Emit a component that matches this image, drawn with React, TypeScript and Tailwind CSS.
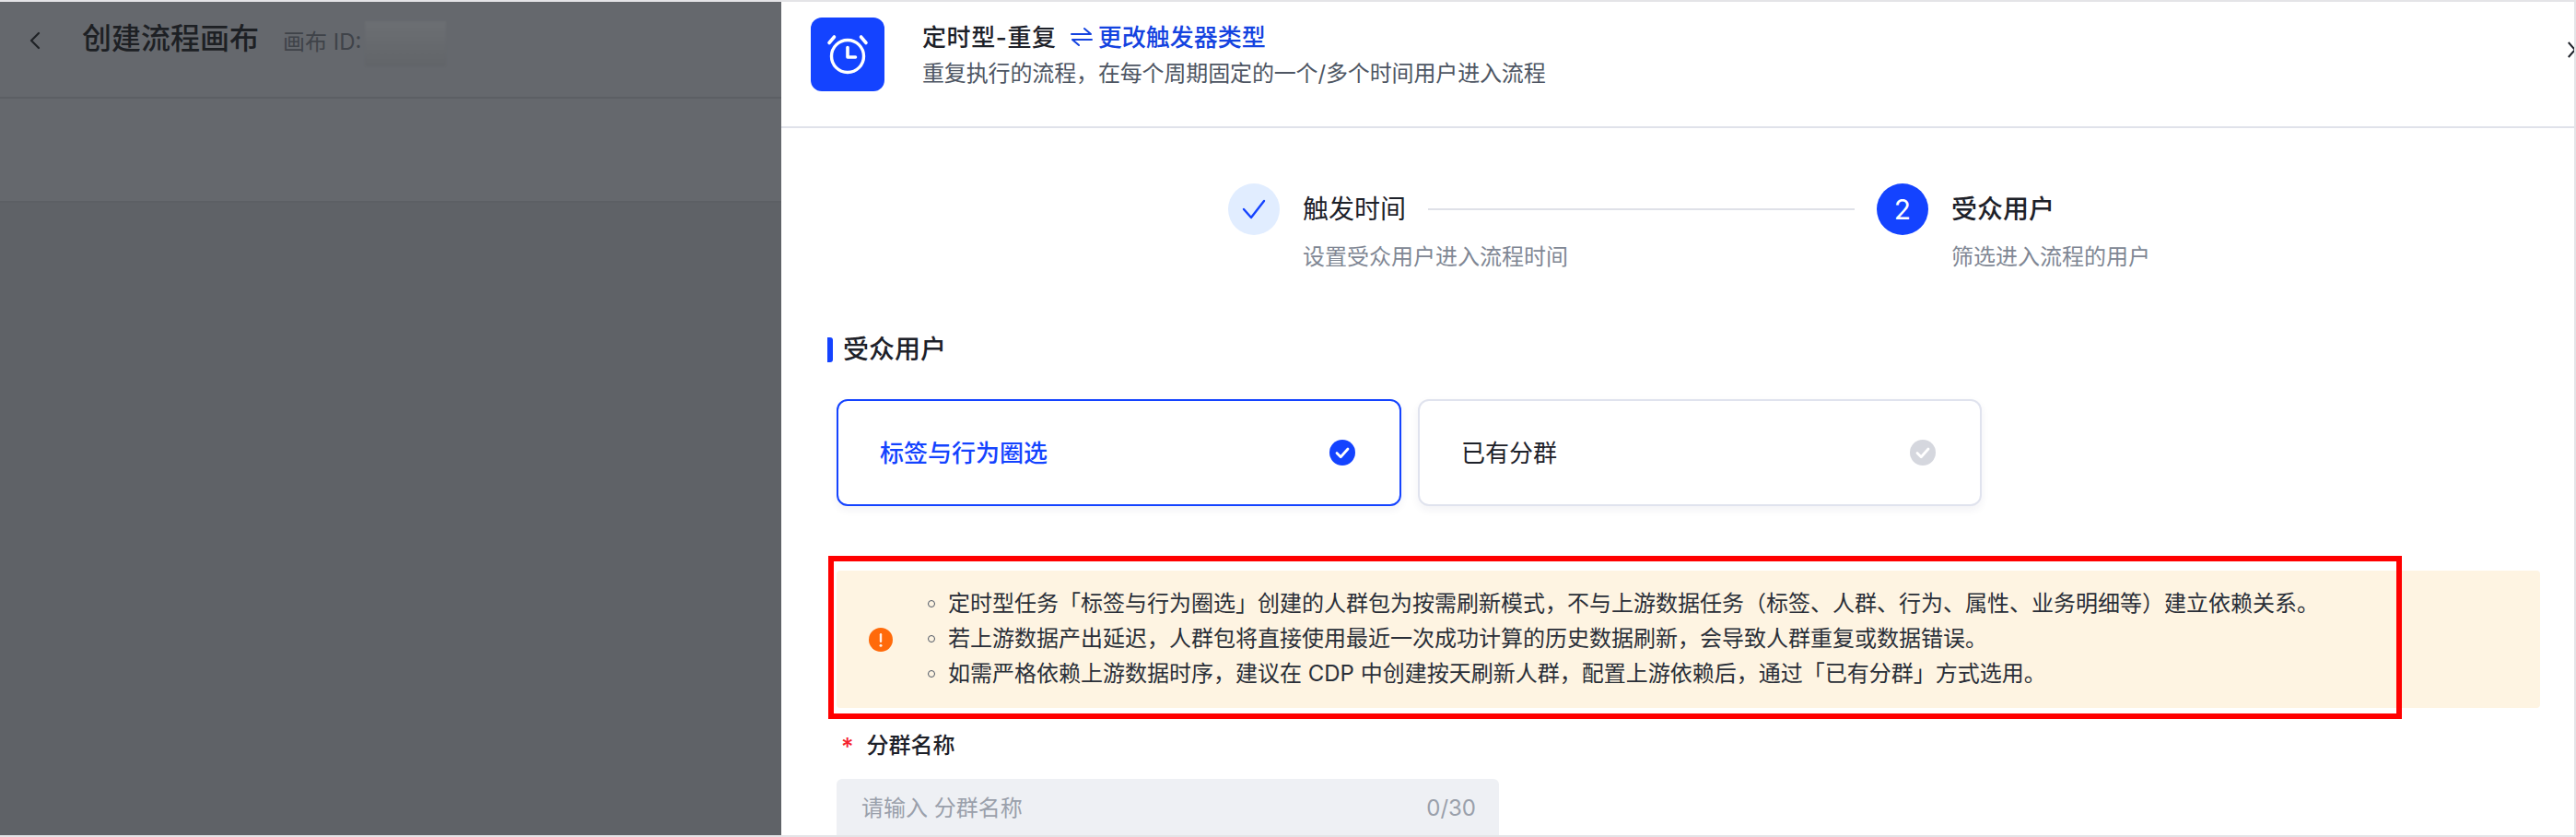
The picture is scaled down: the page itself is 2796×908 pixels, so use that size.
import React from 'react';

const FONT = "font-['Inter','Noto_Sans_CJK_SC',sans-serif]";

const noticeLines = [
  '定时型任务「标签与行为圈选」创建的人群包为按需刷新模式，不与上游数据任务（标签、人群、行为、属性、业务明细等）建立依赖关系。',
  '若上游数据产出延迟，人群包将直接使用最近一次成功计算的历史数据刷新，会导致人群重复或数据错误。',
  '如需严格依赖上游数据时序，建议在 CDP 中创建按天刷新人群，配置上游依赖后，通过「已有分群」方式选用。',
];

const AlarmIcon = () => (
  <svg width="48" height="48" viewBox="0 0 48 48" fill="none" stroke="white" strokeLinecap="round" strokeLinejoin="round">
    <circle cx="24" cy="26" r="17.5" strokeWidth="3.4" />
    <path d="M24 16.5V27h8.5" strokeWidth="3.6" />
    <path d="M4 11.5 9.5 5M44 11.5 38.5 5" strokeWidth="3.6" />
  </svg>
);

const CheckDot = ({ color }: { color: string }) => (
  <svg width="28" height="28" viewBox="0 0 28 28" fill="none">
    <circle cx="14" cy="14" r="14" fill={color} />
    <path d="M8 14.5l4.2 4.2L20 10" stroke="white" strokeWidth="2.8" strokeLinecap="round" strokeLinejoin="round" />
  </svg>
);

const App: React.FC = () => {
  return (
    <div className={`${FONT} relative flex h-[908px] w-[2796px] overflow-hidden border-t-2 border-b-2 border-[#e4e4e7] bg-white`}>
      {/* dimmed canvas page behind the drawer */}
      <div className="flex w-[848px] shrink-0 flex-col bg-[#65686d]">
        <div className="flex h-[105px] items-start border-b-2 border-[#5c5f64] pl-[30px] pt-[14px]">
          <svg className="mt-[18px]" width="16" height="20" viewBox="0 0 16 20" fill="none">
            <path d="M12 2 4 10l8 8" stroke="#1f2226" strokeWidth="2.2" strokeLinecap="round" strokeLinejoin="round" />
          </svg>
          <span className="ml-[43px] text-[32px] font-medium leading-[52px] text-[#1d2024]">创建流程画布</span>
          <span className="ml-[26px] mt-[4px] text-[24px] leading-[52px] text-[#3f4349]">画布 ID:</span>
          <div className="ml-[4px] mt-[7px] h-[49px] w-[88px] bg-gradient-to-b from-[#6c6f73] to-[#626569] blur-[1px]" />
        </div>
        <div className="h-[113px] border-b-2 border-[#5c5f64]" />
        <div className="flex-1 bg-[#5f6267]" />
      </div>

      {/* drawer */}
      <div className="relative flex flex-1 flex-col overflow-hidden border-r-2 border-[#e4e4e7] text-[#1d2129]">
        <div className="flex h-[137px] shrink-0 items-start border-b-2 border-[#e0e2ea] pl-[32px] pt-[17px]">
          <div className="flex h-[80px] w-[80px] items-center justify-center rounded-[12px] bg-[#1443ff]">
            <AlarmIcon />
          </div>
          <div className="ml-[41px]">
            <div className="flex h-[42px] items-center text-[26px] font-medium">
              <span className="tracking-[0.6px]">定时型-重复</span>
              <span className="ml-[15px] flex items-center text-[#1443e0]">
                <svg className="mr-[6px]" width="24" height="22" viewBox="0 0 24 22" fill="none">
                  <path d="M1 8h21L15 2M23 14H2l7 6" stroke="#1443e0" strokeWidth="2" strokeLinecap="round" strokeLinejoin="round" />
                </svg>
                更改触发器类型
              </span>
            </div>
            <div className="mt-[1px] text-[24px] leading-[36px] tracking-[-0.14px] text-[#4e5663]">
              重复执行的流程，在每个周期固定的一个/多个时间用户进入流程
            </div>
          </div>
          <svg className="absolute right-0 top-[42px]" width="7" height="20" viewBox="0 0 7 20" fill="none">
            <path d="M0.8 2 8 10 0.8 18" stroke="#1d2129" strokeWidth="2" />
          </svg>
        </div>

        {/* steps */}
        <div className="mt-[60px] flex pl-[485px]">
          <div className="flex w-[704px]">
            <div className="flex h-[56px] w-[56px] shrink-0 items-center justify-center rounded-full bg-[#e1edff]">
              <svg width="28" height="24" viewBox="0 0 28 24" fill="none">
                <path d="M3 12l8 9L25 3" stroke="#1443ff" strokeWidth="2.4" strokeLinecap="round" strokeLinejoin="round" />
              </svg>
            </div>
            <div className="ml-[25px] flex-1">
              <div className="flex items-center pr-[24px]">
                <span className="text-[28px] leading-[56px]">触发时间</span>
                <div className="ml-[24px] h-[2px] flex-1 bg-[#dfe1e8]" />
              </div>
              <div className="mt-[6px] text-[24px] leading-[36px] text-[#808794]">设置受众用户进入流程时间</div>
            </div>
          </div>
          <div className="flex">
            <div className="flex h-[56px] w-[56px] items-center justify-center rounded-full bg-[#1443ff] text-[30px] text-white">2</div>
            <div className="ml-[25px]">
              <div className="text-[28px] font-medium leading-[56px]">受众用户</div>
              <div className="mt-[6px] text-[24px] leading-[36px] text-[#808794]">筛选进入流程的用户</div>
            </div>
          </div>
        </div>

        {/* section title */}
        <div className="ml-[50px] mt-[64px] flex items-center">
          <div className="h-[27px] w-[6px] rounded-r-[3px] bg-[#1443ff]" />
          <span className="ml-[11px] text-[28px] font-medium leading-[36px]">受众用户</span>
        </div>

        {/* audience type cards */}
        <div className="ml-[60px] mt-[36px] flex gap-[18px]">
          <div className="flex h-[116px] w-[613px] items-center justify-between rounded-[12px] border-2 border-[#1443ff] bg-white pl-[45px] pr-[48px] shadow-[0_4px_10px_rgba(30,40,80,0.06)]">
            <span className="text-[26px] font-medium text-[#1443ff]">标签与行为圈选</span>
            <CheckDot color="#1443ff" />
          </div>
          <div className="flex h-[116px] w-[612px] items-center justify-between rounded-[12px] border-2 border-[#e0e3ee] bg-white pl-[45px] pr-[48px] shadow-[0_4px_10px_rgba(30,40,80,0.06)]">
            <span className="text-[26px]">已有分群</span>
            <CheckDot color="#d5d7de" />
          </div>
        </div>

        {/* notice */}
        <div className="ml-[60px] mr-[37px] mt-[70px] flex h-[149px] shrink-0 items-center rounded-[4px] bg-[#fef4e2] pl-[35px]">
          <svg className="shrink-0" width="26" height="26" viewBox="0 0 26 26">
            <circle cx="13" cy="13" r="13" fill="#ff6a0a" />
            <rect x="11.8" y="6" width="2.4" height="10" rx="1.2" fill="white" opacity="0.9" />
            <circle cx="13" cy="19.3" r="1.5" fill="white" opacity="0.9" />
          </svg>
          <ul className="ml-[38px] mt-[-2px] flex flex-col text-[24px] leading-[38px] text-[#2a2f38]">
            {noticeLines.map((line) => (
              <li key={line} className="flex items-center">
                <span className="mr-[14px] h-[8px] w-[8px] rounded-full border border-[#4e5663]" />
                {line}
              </li>
            ))}
          </ul>
        </div>

        {/* group name field */}
        <div className="ml-[65px] mt-[23px] flex h-[36px] items-center text-[24px] font-medium">
          <span className="mr-[14px] text-[26px] text-[#f5222d]">*</span>
          分群名称
        </div>
        <div className="ml-[60px] mt-[18px] flex h-[64px] w-[719px] shrink-0 items-center justify-between rounded-t-[6px] bg-[#eef0f4] pl-[27px] pr-[25px] text-[24px] text-[#9aa0ab]">
          <span>请输入 分群名称</span>
          <span>0/30</span>
        </div>

        {/* screenshot annotation */}
        <div className="pointer-events-none absolute left-[51px] top-[601px] h-[177px] w-[1708px] border-[6px] border-[#ff0000]" />
      </div>
    </div>
  );
};

export default App;
